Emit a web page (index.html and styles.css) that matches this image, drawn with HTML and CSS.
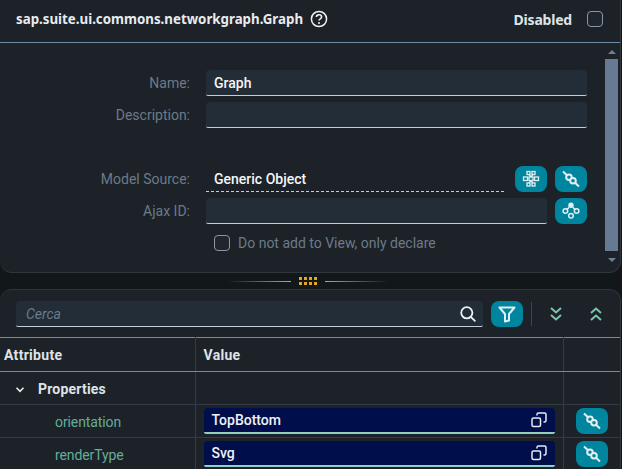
FILE: index.html
```html
<!DOCTYPE html>
<html lang="en">
<head>
  <meta charset="UTF-8" />
  <meta name="viewport" content="width=device-width, initial-scale=1.0" />
  <title>Graph</title>
  <link rel="stylesheet" href="styles.css">
</head>
<body>
  <section class="panel top">
    <header class="head">
      <h1>sap.suite.ui.commons.networkgraph.Graph</h1>
      <svg class="help" width="18" height="18" viewBox="0 0 18 18"><circle cx="9" cy="9" r="7.600" fill="none" stroke="#f0f2f4" stroke-width="1.500"/><path d="M6.400 7.100c0-1.500 1.100-2.400 2.600-2.400s2.600.9 2.600 2.200c0 1.900-2.600 1.900-2.600 3.700" fill="none" stroke="#f0f2f4" stroke-width="1.600"/><circle cx="9" cy="13" r="1" fill="#f0f2f4"/></svg>
      <span class="disabled">Disabled</span>
      <span class="check"></span>
    </header>
    <div class="body">
      <div class="form">
        <div class="row">
          <label>Name:</label>
          <div class="field">Graph</div>
        </div>
        <div class="row">
          <label>Description:</label>
          <div class="field"></div>
        </div>
        <div class="row spacer"></div>
        <div class="row">
          <label>Model Source:</label>
          <div class="field plain">Generic Object</div>
          <button class="btn">
            <svg width="18" height="18" viewBox="0 0 18 18" fill="none" stroke="#e4eef2" stroke-width="1.300"><rect x="5" y="1.500" width="3" height="3"/><rect x="10" y="1.500" width="3" height="3"/><rect x="1.500" y="7" width="4" height="3.500"/><rect x="7" y="7" width="4" height="3.500"/><rect x="12.500" y="7" width="4" height="3.500"/><rect x="5" y="13" width="3" height="3"/><rect x="10" y="13" width="3" height="3"/><path d="M7 4.500 9 7M11 4.500 9 7M7 13 9 10.500M11 13 9 10.500"/></svg>
          </button>
          <button class="btn">
            <svg width="20" height="20" viewBox="0 0 20 20"><use href="#unlink"/></svg>
          </button>
        </div>
        <div class="row">
          <label>Ajax ID:</label>
          <div class="field">&nbsp;</div>
          <button class="btn">
            <svg width="18" height="18" viewBox="0 0 18 18" fill="none" stroke="#e4eef2" stroke-width="1.500"><circle cx="9" cy="3.200" r="2.700" fill="#e4eef2" stroke="none"/><circle cx="3.400" cy="9" r="2.300"/><circle cx="14.600" cy="9" r="2.300"/><circle cx="9" cy="13.800" r="2.300"/><path d="M5 7.500 7.200 5.200M13 7.500 10.800 5.200"/></svg>
          </button>
        </div>
        <div class="declare">
          <span class="check"></span>
          <span>Do not add to View, only declare</span>
        </div>
      </div>
      <div class="scroll">
        <i class="arrow up"></i>
        <div class="thumb"></div>
        <i class="arrow down"></i>
      </div>
    </div>
  </section>

  <div class="splitter">
    <span class="line left"></span>
    <span class="grip"><i></i><i></i><i></i><i></i><i></i><i></i><i></i><i></i></span>
    <span class="line right"></span>
  </div>

  <section class="panel bottom">
    <div class="tools">
      <div class="search">
        <em>Cerca</em>
        <svg width="18" height="18" viewBox="0 0 18 18" fill="none" stroke="#eef1f3" stroke-width="1.800"><circle cx="7.800" cy="7.800" r="5.600"/><path d="m11.800 11.800 4.600 4.600"/></svg>
      </div>
      <button class="btn">
        <svg width="20" height="20" viewBox="0 0 20 20" fill="none" stroke="#e4eef2" stroke-width="2" stroke-linejoin="round"><path d="M2.500 3.500h15l-5.500 6.500v6.500l-4 1v-7.500z"/></svg>
      </button>
      <span class="sep"></span>
      <button class="icon">
        <svg width="14" height="16" viewBox="0 0 14 16" fill="none" stroke="#7cc4b2" stroke-width="2"><path d="m2 2 5 4.500L12 2M2 9l5 4.500L12 9"/></svg>
      </button>
      <button class="icon">
        <svg width="14" height="16" viewBox="0 0 14 16" fill="none" stroke="#7cc4b2" stroke-width="2"><path d="m2 7 5-4.500L12 7M2 14l5-4.500L12 14"/></svg>
      </button>
    </div>
    <table>
      <colgroup><col class="c1"><col class="c2"><col></colgroup>
      <tr class="hdr"><th>Attribute</th><th>Value</th><th></th></tr>
      <tr class="group">
        <td><svg class="caret" width="10" height="8" viewBox="0 0 10 8" fill="none" stroke="#e8ebee" stroke-width="1.600"><path d="m1.500 1.800 3.500 3.500 3.500-3.500"/></svg>Properties</td>
        <td></td><td></td>
      </tr>
      <tr>
        <td class="attr">orientation</td>
        <td><div class="val">TopBottom<svg width="16" height="16" viewBox="0 0 16 16"><use href="#copy"/></svg></div></td>
        <td><button class="btn"><svg width="20" height="20" viewBox="0 0 20 20"><use href="#unlink"/></svg></button></td>
      </tr>
      <tr>
        <td class="attr">renderType</td>
        <td><div class="val">Svg<svg width="16" height="16" viewBox="0 0 16 16"><use href="#copy"/></svg></div></td>
        <td><button class="btn"><svg width="20" height="20" viewBox="0 0 20 20"><use href="#unlink"/></svg></button></td>
      </tr>
    </table>
  </section>

  <svg class="defs" width="0" height="0">
    <symbol id="unlink" viewBox="0 0 20 20">
      <g fill="#00859f" stroke="#e4eef2" stroke-width="2">
        <path d="m2 2.500 16 15" />
        <circle cx="8" cy="8.200" r="2.800" />
        <circle cx="12" cy="11.800" r="2.800" />
      </g>
    </symbol>
    <symbol id="copy" viewBox="0 0 16 16">
      <g fill="none" stroke="#e8ecf0" stroke-width="1.500">
        <rect x="1" y="6" width="8.500" height="8.500" rx="1.500" />
        <path d="M6 3.500V2.500a1.500 1.500 0 0 1 1.500-1.500h6a1.500 1.500 0 0 1 1.500 1.500v6a1.500 1.500 0 0 1-1.500 1.500h-1" />
      </g>
    </symbol>
  </svg>
</body>
</html>
```

FILE: styles.css
```css
* {
  box-sizing: border-box;
}
html, body {
  margin: 0;
  height: 469px;
  overflow: hidden;
}
body {
  font-family: Roboto, sans-serif;
  font-size: 14px;
  color: #f0f2f4;
  background-color: #12171a;
  width: 622px;
}
button {
  font: inherit;
  padding: 0;
  border: 0;
}
.defs {
  position: absolute;
}
.panel {
  width: 621px;
  background-color: #1c2228;
  border-right: 1px solid #2f363e;
}
.top {
  height: 273px;
  border-bottom: 1px solid #2f363e;
  border-radius: 0 0 12px 12px;
}
.bottom {
  height: 180px;
  border-top: 1px solid #2f363e;
  border-radius: 12px 12px 0 0;
  overflow: hidden;
}

.head {
  height: 43px;
  display: flex;
  align-items: center;
  padding: 0 17px 4px 16px;
  border-bottom: 1px solid #6f8ba8;
  font-family: "Noto Sans", sans-serif;
}
.head h1 {
  font-size: 13.300px;
  font-weight: 700;
  margin: 0;
  color: #e8ebee;
}
.help {
  margin-left: 7px;
}
.disabled {
  margin-left: auto;
  margin-right: 15px;
  font-weight: 700;
  letter-spacing: -0.2px;
  color: #dfe3e7;
}
.check {
  display: block;
  width: 16px;
  height: 16px;
  border: 1px solid #8a96a3;
  border-radius: 4px;
  background-color: #1f262d;
}

.body {
  display: flex;
  height: 229px;
}
.form {
  width: 587px;
  padding-top: 27px;
  display: flex;
  flex-direction: column;
  gap: 6px;
}
.row {
  display: flex;
  align-items: stretch;
  gap: 8px;
  height: 26px;
}
.row.spacer {
  height: 26px;
}
.row label {
  width: 190px;
  margin-right: 8px;
  text-align: right;
  line-height: 26px;
  color: #6d7a88;
}
.field {
  flex: 1;
  padding: 0 8px;
  line-height: 26px;
  font-weight: 500;
  background-color: #232d37;
  border-bottom: 1px solid #c4ccd4;
  border-radius: 4px 4px 2px 2px;
  color: #f4f6f8;
}
.field.plain {
  margin-right: 3px;
  background: none;
  border-bottom: 1px dashed #c4ccd4;
  border-radius: 0;
}
.btn {
  display: flex;
  align-items: center;
  justify-content: center;
  width: 32px;
  height: 26px;
  flex: none;
  background-color: #00859f;
  border-radius: 8px;
}
.declare {
  display: flex;
  align-items: center;
  gap: 8px;
  padding-left: 214px;
  margin-top: 5px;
  color: #6d7a88;
}

.scroll {
  margin-left: 18px;
  width: 13px;
  display: flex;
  flex-direction: column;
  align-items: center;
  padding-top: 7px;
}
.arrow {
  width: 0;
  height: 0;
  border-left: 4px solid transparent;
  border-right: 4px solid transparent;
}
.arrow.up {
  border-bottom: 4px solid #6c7f99;
}
.arrow.down {
  border-top: 4px solid #6c7f99;
  margin-top: 7px;
}
.thumb {
  width: 13px;
  height: 192px;
  margin-top: 5px;
  background-color: #677a94;
}

.splitter {
  height: 16px;
  display: flex;
  align-items: center;
  justify-content: center;
  width: 616px;
  gap: 8px;
}
.line {
  width: 64px;
  height: 1px;
}
.line.left {
  background: linear-gradient(to right, transparent, #e8a317);
}
.line.right {
  background: linear-gradient(to left, transparent, #e8a317);
}
.grip {
  display: grid;
  grid-template-columns: repeat(4, 3px);
  gap: 2px;
}
.grip i {
  height: 3px;
  background-color: #e8a317;
}

.tools {
  display: flex;
  align-items: flex-start;
  gap: 8px;
  padding: 11px 0 0 16px;
  height: 47px;
}
.search {
  width: 467px;
  height: 26px;
  display: flex;
  align-items: center;
  justify-content: space-between;
  padding: 0 6px 0 10px;
  background-color: #232d37;
  border-bottom: 1px solid #c4ccd4;
  border-radius: 4px 4px 2px 2px;
}
.search em {
  font-size: 14px;
  color: #6d7a88;
}
.sep {
  width: 1px;
  height: 24px;
  margin-top: 1px;
  background-color: #3c4650;
}
.icon {
  width: 32px;
  height: 26px;
  background: none;
  display: flex;
  align-items: center;
  justify-content: center;
}

table {
  width: 100%;
  table-layout: fixed;
  border-collapse: collapse;
  border-top: 1px solid #6f8ba8;
}
.c1 {
  width: 195px;
}
.c2 {
  width: 368px;
}
th, td {
  padding: 0;
  height: 33px;
  text-align: left;
  border-bottom: 1px solid #333c46;
  border-right: 1px solid #333c46;
}
.hdr th {
  height: 34px;
  padding-left: 4px;
  font-size: 14px;
  letter-spacing: 0.3px;
  color: #dfe3e7;
  border-bottom-color: #6f8ba8;
}
.hdr th:nth-child(2) {
  padding-left: 8px;
}
th:last-child, td:last-child {
  border-right: 0;
}
.group td:first-child {
  padding-top: 1px;
  font-weight: 700;
  font-size: 14px;
  letter-spacing: 0.2px;
  color: #dfe3e7;
}
.caret {
  margin: 0 13px 0 15px;
}
.attr {
  padding: 1px 0 0 55px;
  letter-spacing: -0.1px;
  color: #64ad9b;
}
.val {
  display: flex;
  align-items: center;
  justify-content: space-between;
  height: 26px;
  margin-left: 8px;
  margin-right: 8px;
  padding: 0 8px;
  font-weight: 500;
  background-color: #000e4c;
  border-bottom: 2px solid #8fd0bf;
  border-radius: 4px 4px 2px 2px;
}
td .btn {
  margin-left: 12px;
}
```
